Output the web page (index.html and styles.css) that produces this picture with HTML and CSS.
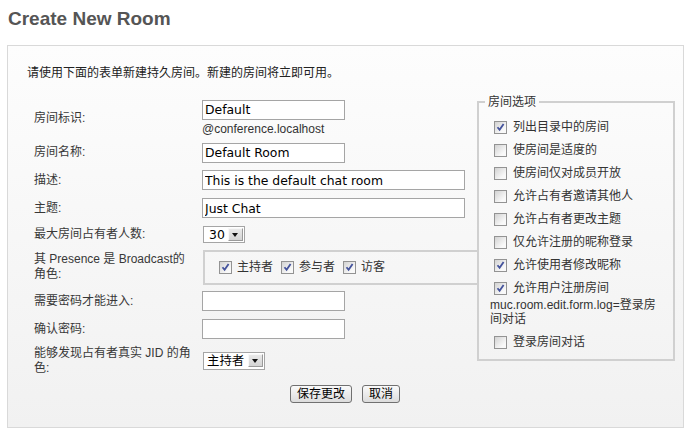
FILE: index.html
```html
<!DOCTYPE html>
<html lang="zh">
<head>
<meta charset="utf-8">
<title>Create New Room</title>
<link rel="stylesheet" href="styles.css">
</head>
<body>
<h1 class="title">Create New Room</h1>
<div class="panel">
  <p class="intro">请使用下面的表单新建持久房间。新建的房间将立即可用。</p>
  <div class="main">
    <div class="form">
      <div class="lbl">房间标识:</div>
      <div class="ctl">
        <input class="txt short" type="text" value="Default">
        <div class="sub">@conference.localhost</div>
      </div>

      <div class="lbl">房间名称:</div>
      <div class="ctl"><input class="txt short" type="text" value="Default Room"></div>

      <div class="lbl">描述:</div>
      <div class="ctl"><input class="txt long" type="text" value="This is the default chat room"></div>

      <div class="lbl">主题:</div>
      <div class="ctl"><input class="txt long" type="text" value="Just Chat"></div>

      <div class="lbl">最大房间占有者人数:</div>
      <div class="ctl">
        <span class="select num"><span class="val">30</span><span class="arrow"></span></span>
      </div>

      <div class="lbl">其 Presence 是 Broadcast的角色:</div>
      <div class="ctl">
        <div class="roles">
          <span class="cb on"><svg viewBox="0 0 11 11" width="11" height="11"><path d="M2.5 5.2 L4.6 7.8 L8.6 2" fill="none" stroke="#44539c" stroke-width="1.8"/></svg></span><span class="rl">主持者</span>
          <span class="cb on"><svg viewBox="0 0 11 11" width="11" height="11"><path d="M2.5 5.2 L4.6 7.8 L8.6 2" fill="none" stroke="#44539c" stroke-width="1.8"/></svg></span><span class="rl">参与者</span>
          <span class="cb on"><svg viewBox="0 0 11 11" width="11" height="11"><path d="M2.5 5.2 L4.6 7.8 L8.6 2" fill="none" stroke="#44539c" stroke-width="1.8"/></svg></span><span class="rl">访客</span>
        </div>
      </div>

      <div class="lbl">需要密码才能进入:</div>
      <div class="ctl"><input class="txt short" type="password"></div>

      <div class="lbl">确认密码:</div>
      <div class="ctl"><input class="txt short" type="password"></div>

      <div class="lbl">能够发现占有者真实 JID 的角色:</div>
      <div class="ctl">
        <span class="select role"><span class="val">主持者</span><span class="arrow"></span></span>
      </div>
    </div>

    <fieldset class="options">
      <legend>房间选项</legend>
      <div class="opt"><span class="cb on"><svg viewBox="0 0 11 11" width="11" height="11"><path d="M2.5 5.2 L4.6 7.8 L8.6 2" fill="none" stroke="#44539c" stroke-width="1.8"/></svg></span><span>列出目录中的房间</span></div>
      <div class="opt"><span class="cb"></span><span>使房间是适度的</span></div>
      <div class="opt"><span class="cb"></span><span>使房间仅对成员开放</span></div>
      <div class="opt"><span class="cb"></span><span>允许占有者邀请其他人</span></div>
      <div class="opt"><span class="cb"></span><span>允许占有者更改主题</span></div>
      <div class="opt"><span class="cb"></span><span>仅允许注册的昵称登录</span></div>
      <div class="opt"><span class="cb on"><svg viewBox="0 0 11 11" width="11" height="11"><path d="M2.5 5.2 L4.6 7.8 L8.6 2" fill="none" stroke="#44539c" stroke-width="1.8"/></svg></span><span>允许使用者修改昵称</span></div>
      <div class="opt tight"><span class="cb on"><svg viewBox="0 0 11 11" width="11" height="11"><path d="M2.5 5.2 L4.6 7.8 L8.6 2" fill="none" stroke="#44539c" stroke-width="1.8"/></svg></span><span>允许用户注册房间</span></div>
      <div class="note">muc.room.edit.form.log=登录房间对话</div>
      <div class="opt"><span class="cb"></span><span>登录房间对话</span></div>
    </fieldset>
  </div>
  <div class="buttons">
    <button class="btn" type="button">保存更改</button>
    <button class="btn" type="button">取消</button>
  </div>
</div>
</body>
</html>
```

FILE: styles.css
```css
body {
  margin: 8px 7px;
  background: #fff;
  font-family: "Liberation Sans", "Noto Sans CJK SC", sans-serif;
  font-size: 12px;
  color: #333;
}

.title {
  margin: 0 0 15px 1px;
  font-size: 19px;
  line-height: 22px;
  font-weight: bold;
  color: #555;
}

.panel {
  border: 1px solid #d9d9d9;
  background: linear-gradient(#fdfdfd, #f1f1f1);
  padding: 19px 8px 24px 19px;
}

.intro {
  margin: 0 0 13px 0;
  line-height: 16px;
  color: #222;
}

.main {
  display: flex;
  align-items: flex-start;
}

.form {
  margin-left: 7px;
  width: 443px;
  flex: none;
  padding-top: 3px;
  display: grid;
  grid-template-columns: 160px 1fr;
  column-gap: 8px;
  grid-template-rows: 42px 27px 28px 28px 25px 40px 28px 28px 35px;
  align-items: center;
}

.lbl {
  line-height: 15px;
  color: #383838;
}

.ctl {
  display: flex;
  flex-direction: column;
  align-items: flex-start;
}

.txt {
  box-sizing: border-box;
  height: 20px;
  margin: 0;
  padding: 0 2px;
  border: 1px solid #a5a5a5;
  border-radius: 0;
  background: #fff;
  font-family: "DejaVu Sans", "Noto Sans CJK SC", sans-serif;
  font-size: 12.4px;
  color: #000;
  outline: none;
}

.txt.short { width: 143px; }
.txt.long { width: 263px; }

.sub {
  margin-top: 2px;
  line-height: 15px;
  color: #333;
}

.select {
  display: inline-flex;
  align-items: center;
  box-sizing: border-box;
  height: 17px;
  margin-left: 1px;
  border: 1px solid #a5a5a5;
  background: #fff;
}

.select.num { width: 42px; }
.select.role { width: 62px; height: 18px; }

.select .val {
  flex: 1;
  padding-left: 5px;
  font-family: "DejaVu Sans", "Noto Sans CJK SC", sans-serif;
  font-size: 12.4px;
  line-height: 15px;
  color: #000;
}

.select.role .val { padding-left: 3px; }

.select .arrow {
  position: relative;
  box-sizing: border-box;
  width: 15px;
  height: 13px;
  margin-right: 1px;
  background: linear-gradient(#e9e9e9, #d4d4d4);
  border: 1px solid;
  border-color: #f8f8f8 #9a9a9a #9a9a9a #f8f8f8;
}

.select .arrow::after {
  content: "";
  position: absolute;
  left: 3px;
  top: 4px;
  border-top: 4px solid #111;
  border-left: 3.5px solid transparent;
  border-right: 3.5px solid transparent;
}

.roles {
  box-sizing: border-box;
  width: 274px;
  height: 35px;
  margin-left: 1px;
  border: 2px solid #d0d0d0;
  border-right: 0;
  display: flex;
  align-items: center;
  padding-left: 14px;
}

.cb {
  box-sizing: border-box;
  display: inline-block;
  flex: none;
  width: 13px;
  height: 13px;
  border: 1px solid #939393;
  background: linear-gradient(135deg, #d2d2d2, #f9f9f9 75%);
}

.cb svg { display: block; }

.roles .cb { margin-right: 5px; }
.roles .rl { margin-right: 8px; line-height: 15px; color: #333; }

.options {
  box-sizing: border-box;
  width: 198px;
  flex: none;
  margin: 0;
  min-width: 0;
  padding: 8px 11px 7px 11px;
  border: 2px solid #d0d0d0;
  display: flex;
  flex-direction: column;
}

.options legend {
  margin-left: -5px;
  padding: 0 3px;
  line-height: 16px;
  color: #333;
}

.opt {
  display: flex;
  align-items: center;
  height: 19px;
  margin-bottom: 4px;
  line-height: 15px;
  color: #333;
}

.opt:last-child { margin-bottom: 0; }
.opt.tight { margin-bottom: 0; }

.opt .cb {
  margin-left: 4px;
  margin-right: 6px;
}

.note {
  line-height: 14px;
  margin-bottom: 7px;
  color: #333;
}

.buttons {
  margin: 7px 0 0 -12px;
  display: flex;
  justify-content: center;
  gap: 10px;
}

.btn {
  box-sizing: border-box;
  height: 18px;
  margin: 0;
  padding: 0 6px;
  border: 1px solid #707070;
  border-radius: 3px;
  background: linear-gradient(#fafafa, #dcdcdc);
  font-family: "Liberation Sans", "Noto Sans CJK SC", sans-serif;
  font-size: 12px;
  line-height: 15px;
  color: #000;
}
```
